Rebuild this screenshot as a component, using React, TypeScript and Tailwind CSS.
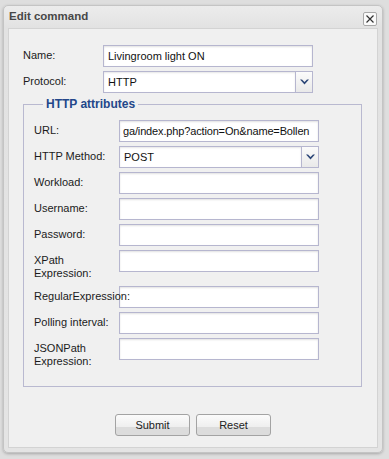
import React from "react";

const inputCls =
  "h-[22px] border border-[#b6b6cf] bg-white px-[4px] text-[11px] text-[#111] shadow-[inset_0_1px_2px_rgba(0,0,0,0.12)] outline-none";

function Select({ value, width }: { value: string; width: string }) {
  return (
    <div className={`flex h-[22px] ${width} border border-[#b6b6cf] bg-white`}>
      <div className="flex flex-1 items-center px-[4px] text-[11px] text-[#111] shadow-[inset_0_1px_2px_rgba(0,0,0,0.1)]">
        {value}
      </div>
      <div className="flex w-[17px] items-center justify-center border-l border-[#b6b6cf] bg-[linear-gradient(to_bottom,#fbfbfb,#e9e9e9)]">
        <svg width="9" height="6" viewBox="0 0 9 6">
          <polygon points="0,0.5 2,0.5 4.5,3 7,0.5 9,0.5 4.5,5.5" fill="#2c4677" />
        </svg>
      </div>
    </div>
  );
}

function Row({
  label,
  labelWidth,
  children,
}: {
  label: React.ReactNode;
  labelWidth: string;
  children: React.ReactNode;
}) {
  return (
    <div className="flex items-start">
      <div
        className={`${labelWidth} relative z-10 shrink-0 whitespace-nowrap pt-[4px] text-[11px] leading-[13px] text-[#1b1b1b]`}
      >
        {label}
      </div>
      {children}
    </div>
  );
}

function Button({ children }: { children: React.ReactNode }) {
  return (
    <button className="h-[22px] w-[75px] rounded-[3px] border border-[#a3a3a3] bg-[linear-gradient(to_bottom,#fbfbfb_0%,#efefef_58%,#dcdcdc_60%,#dcdcdc_100%)] text-[11px] text-[#222]">
      {children}
    </button>
  );
}

export default function App() {
  const attrs: { label: React.ReactNode; value?: string; select?: boolean; tall?: boolean }[] = [
    { label: "URL:", value: "ga/index.php?action=On&name=Bollen" },
    { label: "HTTP Method:", value: "POST", select: true },
    { label: "Workload:" },
    { label: "Username:" },
    { label: "Password:" },
    { label: <>XPath<br />Expression:</>, tall: true },
    { label: "RegularExpression:" },
    { label: "Polling interval:" },
    { label: <>JSONPath<br />Expression:</>, tall: true },
  ];

  return (
    <div
      className="h-[459px] w-[389px] overflow-hidden bg-[#dedede] pt-[5px] pl-[3px]"
      style={{ fontFamily: '"Liberation Sans", Arial, sans-serif' }}
    >
      <div className="flex h-[448px] w-[380px] flex-col rounded-[5px] border border-[#c4c4c4] bg-[linear-gradient(to_bottom,#ececec_0px,#e2e2e2_22px,#e4e4e4_100%)] shadow-[0_1px_3px_rgba(0,0,0,0.25)]">
        <div className="flex h-[22px] items-center justify-between pl-[5px] pr-[5px]">
          <span className="text-[11.5px] font-bold text-[#474747]">Edit command</span>
          <div className="mt-[3px] flex h-[14px] w-[14px] items-center justify-center rounded-[2px] border border-[#a9a9a9] bg-[#fafafa]">
            <svg width="8" height="8" viewBox="0 0 8 8">
              <path d="M0.5 0.5 L7.5 7.5 M7.5 0.5 L0.5 7.5" stroke="#333" strokeWidth="1.2" />
            </svg>
          </div>
        </div>
        <div className="mx-[4px] mb-[4px] flex h-[420px] flex-col border border-[#d3d3d3] bg-[#f0f0f0] pt-[16px] pl-[14px]">
          <div className="flex flex-col gap-[4px]">
            <Row label="Name:" labelWidth="w-[80px]">
              <input readOnly defaultValue="Livingroom light ON" className={`${inputCls} w-[210px]`} />
            </Row>
            <Row label="Protocol:" labelWidth="w-[80px]">
              <Select value="HTTP" width="w-[210px]" />
            </Row>
          </div>
          <fieldset className="mt-[3px] w-[339px] border border-[#b9b9d0] pt-[8px] pb-[16px] pl-[10px]">
            <legend className="ml-[9px] px-[3px] text-[12px] font-bold leading-[16px] text-[#23478a]">
              HTTP attributes
            </legend>
            <div className="flex flex-col gap-[4px]">
              {attrs.map((a, i) => (
                <Row key={i} label={a.label} labelWidth="w-[85px]">
                  {a.select ? (
                    <Select value={a.value ?? ""} width="w-[200px]" />
                  ) : (
                    <input
                      readOnly
                      defaultValue={a.value ?? ""}
                      className={`${inputCls} w-[200px] ${
                        i === 0 ? "border-[#9fb0d4] pl-[3px] pr-[1px] tracking-[-0.15px]" : ""
                      }`}
                    />
                  )}
                  {a.tall && <div className="h-[32px] w-0" />}
                </Row>
              ))}
            </div>
          </fieldset>
          <div className="mt-[27px] flex justify-center gap-[6px] pr-[14px]">
            <Button>Submit</Button>
            <Button>Reset</Button>
          </div>
        </div>
      </div>
    </div>
  );
}
